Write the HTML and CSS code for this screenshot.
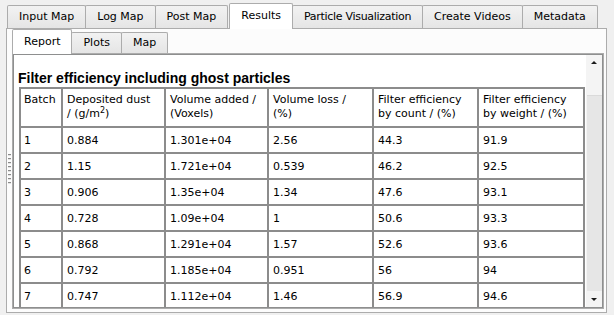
FILE: index.html
```html
<!DOCTYPE html>
<html>
<head>
<meta charset="utf-8">
<link rel="stylesheet" href="styles.css">
</head>
<body>
<div class="app">
  <div class="tabbar outer-tabs">
    <div class="tab">Input Map</div>
    <div class="tab">Log Map</div>
    <div class="tab">Post Map</div>
    <div class="tab active">Results</div>
    <div class="tab tight">Particle Visualization</div>
    <div class="tab">Create Videos</div>
    <div class="tab">Metadata</div>
  </div>
  <div class="outer-pane">
    <div class="grip"><i></i><i></i><i></i><i></i><i></i><i></i><i></i><i></i></div>
    <div class="inner">
      <div class="tabbar inner-tabs">
        <div class="itab active">Report</div>
        <div class="itab">Plots</div>
        <div class="itab">Map</div>
      </div>
      <div class="inner-pane">
        <div class="browser">
          <div class="doc">
            <h3 class="title">Filter efficiency including ghost particles</h3>
            <table class="report">
              <thead>
                <tr>
                  <th class="c1">Batch</th>
                  <th class="c2">Deposited dust<br>/ (g/m<sup>2</sup>)</th>
                  <th class="c3">Volume added /<br>(Voxels)</th>
                  <th class="c4">Volume loss /<br>(%)</th>
                  <th class="c5">Filter efficiency<br>by count / (%)</th>
                  <th class="c6">Filter efficiency<br>by weight / (%)</th>
                </tr>
              </thead>
              <tbody>
                <tr><td>1</td><td>0.884</td><td>1.301e+04</td><td>2.56</td><td>44.3</td><td>91.9</td></tr>
                <tr><td>2</td><td>1.15</td><td>1.721e+04</td><td>0.539</td><td>46.2</td><td>92.5</td></tr>
                <tr><td>3</td><td>0.906</td><td>1.35e+04</td><td>1.34</td><td>47.6</td><td>93.1</td></tr>
                <tr><td>4</td><td>0.728</td><td>1.09e+04</td><td>1</td><td>50.6</td><td>93.3</td></tr>
                <tr><td>5</td><td>0.868</td><td>1.291e+04</td><td>1.57</td><td>52.6</td><td>93.6</td></tr>
                <tr><td>6</td><td>0.792</td><td>1.185e+04</td><td>0.951</td><td>56</td><td>94</td></tr>
                <tr><td>7</td><td>0.747</td><td>1.112e+04</td><td>1.46</td><td>56.9</td><td>94.6</td></tr>
              </tbody>
            </table>
          </div>
          <div class="vscroll">
            <div class="sb-btn"><svg width="16" height="16" viewBox="0 0 16 16"><polygon points="5,9 11,9 8,6" fill="#1a1a1a"/></svg></div>
            <div class="sb-track"><div class="sb-thumb"></div></div>
            <div class="sb-btn"><svg width="16" height="16" viewBox="0 0 16 16"><polygon points="5,7 11,7 8,10" fill="#1a1a1a"/></svg></div>
          </div>
        </div>
      </div>
    </div>
  </div>
</div>
</body>
</html>
```

FILE: styles.css
```css
html, body {
  margin: 0;
  padding: 0;
}
body {
  width: 614px;
  height: 315px;
  overflow: hidden;
  background: #f0f0f0;
  font-family: "DejaVu Sans", sans-serif;
  font-size: 11px;
  line-height: 14px;
  color: #000;
}
.app {
  padding: 3px 0 0 6px;
  width: 601px;
}
.tabbar {
  display: flex;
  align-items: flex-end;
  position: relative;
  z-index: 2;
}
.outer-tabs {
  height: 25px;
  padding-left: 1px;
}
.tab {
  box-sizing: border-box;
  height: 23px;
  padding: 4px 11px 0;
  border: 1px solid #acacac;
  border-bottom: none;
  border-radius: 2px 2px 0 0;
  margin-right: -1px;
  background: linear-gradient(#f2f2f2, #e5e5e5);
  white-space: nowrap;
}
.tab.active {
  height: 26px;
  margin-bottom: -1px;
  margin-left: 2px;
  padding-top: 5px;
  background: #ffffff;
  position: relative;
  z-index: 3;
}
.tab.tight {
  letter-spacing: -0.3px;
}
.outer-pane {
  box-sizing: border-box;
  height: 285px;
  border: 1px solid #acacac;
  background: #fcfcfc;
  padding: 0 2px 3px 0;
  display: flex;
}
.grip {
  width: 5px;
  display: flex;
  flex-direction: column;
  justify-content: center;
  align-items: center;
  gap: 2px;
}
.grip i {
  display: block;
  width: 3px;
  height: 1px;
  background: #8a8a8a;
  border-bottom: 1px solid #e2e2e2;
}
.inner {
  width: 592px;
  display: flex;
  flex-direction: column;
}
.inner-tabs {
  height: 24px;
}
.itab {
  box-sizing: border-box;
  height: 21px;
  padding: 3px 11px 0;
  border: 1px solid #acacac;
  border-bottom: none;
  border-radius: 2px 2px 0 0;
  margin-right: -1px;
  background: linear-gradient(#f2f2f2, #e5e5e5);
  white-space: nowrap;
}
.itab.active {
  height: 25px;
  margin-bottom: -1px;
  padding-top: 5px;
  background: #ffffff;
  position: relative;
  z-index: 3;
}
.inner-pane {
  flex: 1;
  border: 1px solid #acacac;
  background: #fff;
  display: flex;
  min-height: 0;
}
.browser {
  flex: 1;
  border: 1px solid #8e8f8f;
  display: flex;
  min-height: 0;
}
.doc {
  flex: 1;
  overflow: hidden;
  padding-left: 4px;
  background: #fff;
}
.title {
  margin: 15px 0 1px;
  font-family: "Liberation Sans", Arial, sans-serif;
  font-weight: bold;
  font-size: 14px;
  line-height: 16px;
}
.report {
  margin-left: 1px;
  border-collapse: separate;
  border-spacing: 0;
  border: 1px solid #8c8c8c;
  table-layout: fixed;
  width: 566px;
}
.report th, .report td {
  box-sizing: border-box;
  border: 1px solid #8c8c8c;
  text-align: left;
  vertical-align: top;
  font-weight: normal;
  white-space: nowrap;
}
.report th {
  padding: 4px 4px 5px;
}
.report td {
  padding: 6px 4px 4px;
}
.report .c1 { width: 42px; padding-left: 3px; }
.report .c2 { width: 103px; }
.report .c3 { width: 103px; }
.report .c4 { width: 105px; }
.report .c5 { width: 105px; }
.report .c6 { width: 106px; }
.report tbody td:first-child { padding-left: 3px; }
sup {
  font-size: 8px;
  line-height: 0;
  vertical-align: 4px;
}
.vscroll {
  width: 16px;
  display: flex;
  flex-direction: column;
  background: #e8e8e8;
}
.sb-btn {
  height: 16px;
  background: #f4f4f4;
  display: flex;
}
.sb-track {
  flex: 1;
  background: #e6e6e6;
  border-left: 1px solid #f4f4f4;
}
.sb-thumb {
  height: 24px;
  margin-top: 0;
  background: #f4f4f4;
  border-bottom: 1px solid #dadada;
}
```
